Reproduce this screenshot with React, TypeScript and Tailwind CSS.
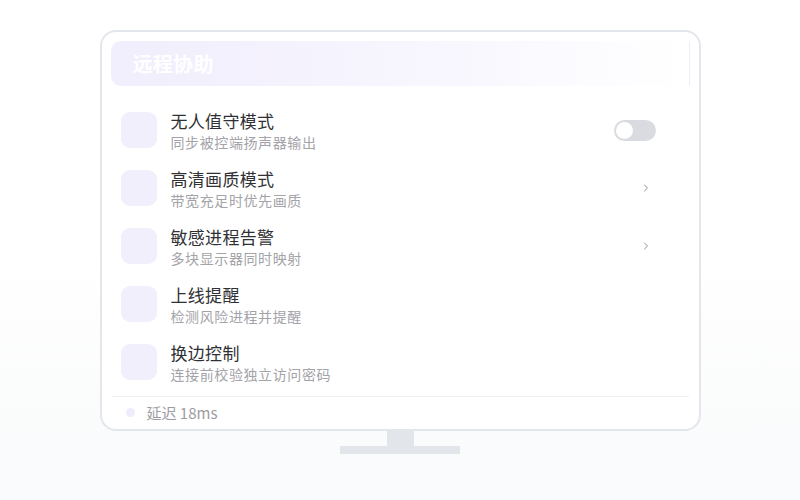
import { ChevronRight } from "lucide-react";

type Row = {
  title: string;
  desc: string;
  action: "toggle" | "chevron" | "none";
};

const rows: Row[] = [
  { title: "无人值守模式", desc: "同步被控端扬声器输出", action: "toggle" },
  { title: "高清画质模式", desc: "带宽充足时优先画质", action: "chevron" },
  { title: "敏感进程告警", desc: "多块显示器同时映射", action: "chevron" },
  { title: "上线提醒", desc: "检测风险进程并提醒", action: "none" },
  { title: "换边控制", desc: "连接前校验独立访问密码", action: "none" },
];

export default function App() {
  return (
    <div
      className="w-[800px] h-[500px] flex flex-col items-center pt-[30px] bg-gradient-to-b from-white from-50% to-[#f9fafb]"
      style={{ fontFamily: '"Noto Sans CJK SC", "Noto Sans", sans-serif' }}
    >
      {/* screen */}
      <div className="w-[601px] h-[401px] shrink-0 border-2 border-[#e3e6eb] rounded-[16px] bg-white pt-[9px] px-[9px] pb-[2px] flex flex-col">
        <div className="h-[45px] shrink-0 rounded-l-[10px] bg-gradient-to-r from-[#f1eefd] via-[#f7f5fe] to-white border-r border-[#eceef2] flex items-center px-[22px]">
          <span className="text-white text-[20px] leading-[26px] font-bold tracking-[0.3px]">远程协助</span>
        </div>

        <div className="mt-[15px] flex flex-col shrink-0">
          {rows.map((r) => (
            <div key={r.title} className="h-[58px] shrink-0 flex items-center pl-[10px] pr-[34px]">
              <div className="w-[36px] h-[36px] rounded-[9px] bg-[#f1effc] shrink-0" />
              <div className="ml-[14px] flex-1 flex flex-col mt-[2px]">
                <span className="text-[17px] leading-[22px] tracking-[0.3px] text-[#303034]">{r.title}</span>
                <span className="text-[14px] leading-[19px] mt-[1px] tracking-[0.6px] text-[#a3a3a8]">{r.desc}</span>
              </div>
              {r.action === "toggle" && (
                <div className="w-[42px] h-[21px] rounded-full bg-[#d9dbe1] flex items-center px-[2px]">
                  <div className="w-[17px] h-[17px] rounded-full bg-white" />
                </div>
              )}
              {r.action === "chevron" && (
                <ChevronRight className="w-[12px] h-[12px] text-[#8d919a] mr-[4px]" strokeWidth={2} />
              )}
            </div>
          ))}
        </div>

        <div className="mt-[5px] mx-[1px] border-t border-[#eef0f3] flex-1 min-h-0 flex items-center pl-[14px] pt-[1px]">
          <div className="w-[9px] h-[9px] rounded-full bg-[#efedfb]" />
          <span className="ml-[12px] text-[15px] leading-[20px] text-[#9c9ca2]">延迟 18ms</span>
        </div>
      </div>

      {/* stand */}
      <div className="w-[27px] h-[15px] bg-[#e2e5ea]" />
      <div className="w-[120px] h-[8px] bg-[#e2e5ea]" />
    </div>
  );
}
